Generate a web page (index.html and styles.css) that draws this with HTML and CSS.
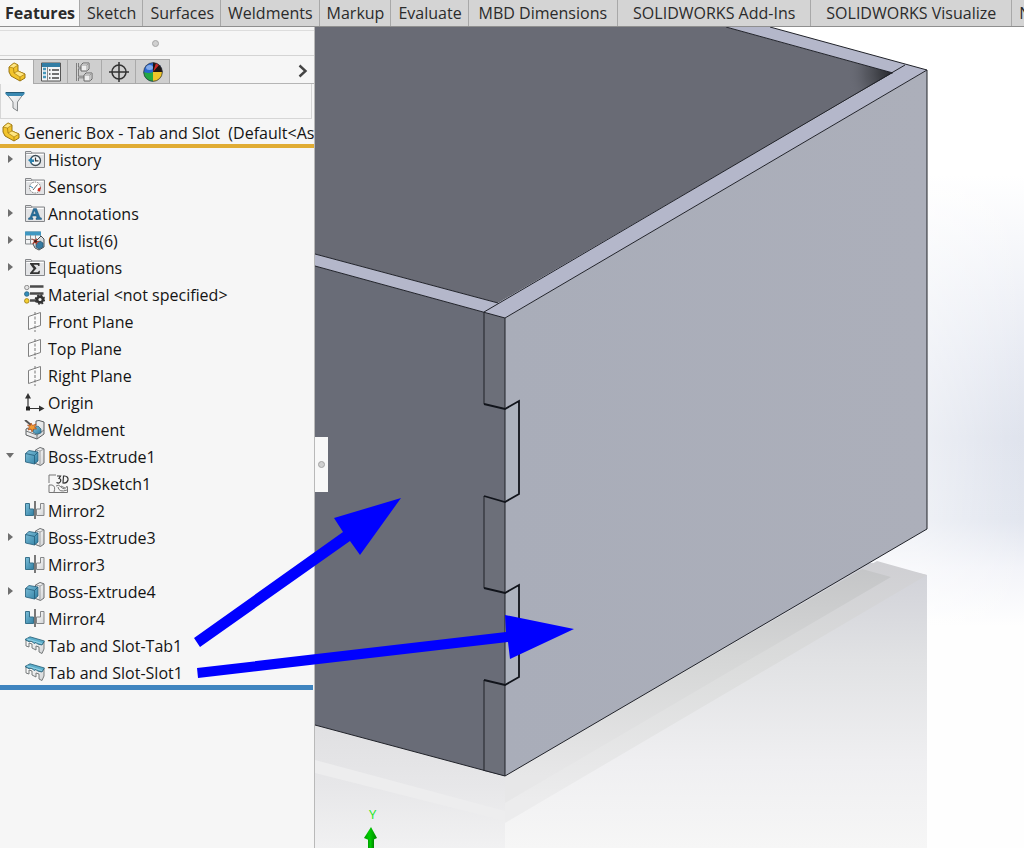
FILE: index.html
```html
<!DOCTYPE html>
<html lang="en">
<head>
<meta charset="utf-8">
<title>Generic Box - Tab and Slot</title>
<link rel="stylesheet" href="styles.css">
</head>
<body>
<svg class="sprite" aria-hidden="true">
  <defs>
    <linearGradient id="blue" x1="0" y1="0" x2="1" y2="1"><stop offset="0" stop-color="#7fc0da"/><stop offset="1" stop-color="#2f7fa3"/></linearGradient>
    <linearGradient id="grey" x1="0" y1="0" x2="1" y2="1"><stop offset="0" stop-color="#fff"/><stop offset="1" stop-color="#d2d4d6"/></linearGradient>
    <symbol id="folder" viewBox="0 0 21 20">
      <path d="M1.5 17.5V1.5H7L8 3H20.5V17.5Z" fill="#e3e4e6" stroke="#85878a"/>
      <path d="M2.5 4.5H19.5" stroke="#fff"/><path d="M2 3.5H8" stroke="#9a9c9f"/>
    </symbol>
    <symbol id="part" viewBox="0 0 20 20">
      <path d="M2 5L7 1L11 3V9L18 12V16L13 19L4 14L2 10Z" fill="#f2c42c" stroke="#8d6a08" stroke-width=".9" stroke-linejoin="round"/>
      <path d="M2 5L7 1L11 3L6.500 6ZM7 11L11 9L18 12L13 15Z" fill="#ffe680" stroke="#a67c10" stroke-width=".7"/>
      <path d="M6.500 6L7 11M13 15V19" stroke="#a67c10" stroke-width=".8"/>
    </symbol>
    <symbol id="history" viewBox="0 0 21 20">
      <use href="#folder" width="21" height="20"/>
      <circle cx="11.500" cy="10.500" r="5" fill="#f4f8fa" stroke="#3d4b54" stroke-width="1.300"/>
      <path d="M11.500 7.500V10.800H14.500" fill="none" stroke="#333" stroke-width="1.200"/>
      <path d="M4 10L8 7.500V9.500H10V12H8V14Z" fill="#2d83b0"/>
    </symbol>
    <symbol id="sensors" viewBox="0 0 21 20">
      <use href="#folder" width="21" height="20"/>
      <circle cx="11" cy="10.500" r="5.500" fill="#fff" stroke="#777" stroke-dasharray="1.500 1"/>
      <path d="M9 13L13.500 7.500" stroke="#666"/><path d="M6 9L9 11" stroke="#3186b4"/>
      <path d="M14 11.500L17 10L16 14.500L13.500 14Z" fill="#d22d20"/>
    </symbol>
    <symbol id="annotations" viewBox="0 0 21 20">
      <use href="#folder" width="21" height="20"/>
      <path d="M4.500 15.500V14L6 13.500L9.500 4.500H12.500L16 13.500L17.500 14V15.500H12V14L13 13.500L12.300 12H8.500L8 13.500L9 14V15.500ZM9.200 10H11.800L10.500 6.500Z" fill="#276f9c" stroke="#184d70" stroke-width=".4"/>
    </symbol>
    <symbol id="cutlist" viewBox="0 0 21 20">
      <path d="M1.500 1H16.500V13H1.500Z" fill="#f2f3f4" stroke="#84888b"/><path d="M1 .5H17V4.500H1Z" fill="#3f97c1"/>
      <path d="M1.500 8.500H16M6.500 4V13M11.500 4V13" stroke="#8b8f92"/>
      <path d="M9 13L17 5L20 8V16L15 19L11 17Z" fill="#d8dcdf" stroke="#4c5052"/>
      <path d="M12 13L16 10L19 12V16L15 18L12 16Z" fill="#367ba1" stroke="#24536e" stroke-width=".7"/>
      <path d="M7 7L11 9L13 7L13 10L16 10L13 12L13 14L11 12L8 13L10 10Z" fill="#b84433"/><circle cx="11.500" cy="10.300" r="1.300" fill="#32201d"/>
    </symbol>
    <symbol id="equations" viewBox="0 0 21 20">
      <use href="#folder" width="21" height="20"/>
      <path d="M6 5H15.500V8H14.500L13.500 6.800H9.500L12.500 10.300L9 14.200H13.800L15 12.700H16L15.500 16H6V15L9.500 10.700L6 6Z" fill="#333"/>
    </symbol>
    <symbol id="material" viewBox="0 0 21 20">
      <path d="M6 1.500H19.500M6 8.500H19.500M6 15.500H12" stroke="#4b4b4b" stroke-width="2.400"/>
      <circle cx="2.800" cy="2.500" r="2.200" fill="#e4e4e4" stroke="#777" stroke-width=".8"/><circle cx="2.800" cy="9" r="2.300" fill="#318cbb" stroke="#27627f" stroke-width=".8"/><circle cx="2.800" cy="15.900" r="2.300" fill="#f5cf32" stroke="#987811" stroke-width=".8"/>
      <circle cx="16" cy="14.500" r="2.900" fill="none" stroke="#333" stroke-width="2.600"/><circle cx="16" cy="14.500" r="4.500" fill="none" stroke="#333" stroke-width="1.500" stroke-dasharray="1.800 1.734"/>
    </symbol>
    <symbol id="plane" viewBox="0 0 21 20">
      <path d="M4.500 4.500L16.500 .5V13.500L4.500 17.500Z" fill="#fafafa" stroke="#808080"/><path d="M11 0V20" stroke="#777" stroke-dasharray="3 1.500"/>
    </symbol>
    <symbol id="origin" viewBox="0 0 21 20">
      <path d="M4 4V15.500H16" fill="none" stroke="#333" stroke-width="1.200"/><path d="M1 5.500L4 0L7 5.500ZM15 12.500L20.500 15.500L15 18.500Z" fill="#333"/><path d="M2 13.500H6V17.500H2Z" fill="#222"/>
    </symbol>
    <symbol id="weldment" viewBox="0 0 21 20">
      <path d="M2 9L4 8L12 11V1L15 .5L20 2V14L13 19L2 15Z" fill="url(#grey)" stroke="#5b5e60"/><path d="M13 19V15L20 10M2 11L13 15" fill="none" stroke="#707476"/>
      <path d="M10 8L14 6L17 9V13L12 14L9 12Z" fill="url(#blue)" stroke="#2a607b" stroke-width=".7"/>
      <path d="M1 0L7 5" stroke="#555" stroke-width="2"/><path d="M7 3L8.500 5.500L12 4L10.500 7L12.500 9L9.500 9L8 12L7 9L4 10L5.500 7L3.500 5L6.500 5.500Z" fill="#f19a32" stroke="#ae4b1b" stroke-width=".7"/>
    </symbol>
    <symbol id="extrude" viewBox="0 0 21 20">
      <path d="M11.500 3L16 .5L20 1.800V16L16.500 18.500L11.500 16.500Z" fill="url(#grey)" stroke="#6a6d6f"/><path d="M11.500 3L16 4V18M16 4L20 2" fill="none" stroke="#8b8e90" stroke-width=".8"/>
      <path d="M1.500 6.500L5 3.500L14 5V14L10.500 17L1.500 15Z" fill="url(#blue)" stroke="#235c78" stroke-width=".8"/><path d="M1.500 6.500L10.500 8.500L14 5M10.500 8.500V17" fill="none" stroke="#235c78" stroke-width=".8"/>
    </symbol>
    <symbol id="sketch3d" viewBox="0 0 21 20">
      <path d="M8 1H1V9M1 11V18.500H19.500V12.500" fill="none" stroke="#777"/>
      <path d="M9 2H12.500L11 4.500Q13.500 4.800 12.500 7.500Q11 10 8.500 8.500M15.500 2H16.500Q20.500 2.500 20 6Q19 9.500 15 9Z" fill="none" stroke="#333" stroke-width="1.200"/>
      <path d="M1 11H4Q8 12 6 18M8 12Q11 10 13 13Q17 17 19 12M10 13Q11 19 19 16M13 12L17 14" fill="none" stroke="#777"/>
    </symbol>
    <symbol id="mirror" viewBox="0 0 21 20">
      <path d="M1.500 2.500H5.500V8H9.500V14.500H1.500Z" fill="url(#blue)" stroke="#37718b"/><path d="M20 2.500H16.500V8H12.500V14.500H20Z" fill="url(#grey)" stroke="#858789"/><path d="M11 0V18" stroke="#444" stroke-width="1.400"/>
    </symbol>
    <symbol id="tabslot" viewBox="0 0 21 20">
      <path d="M2 4V10L5 11V7L8 8V12L12 14V10L15 11V16L18 17.500L20 13V6L17 8Z" fill="url(#grey)" stroke="#6c6f70" stroke-width=".9"/>
      <path d="M1 3.500L6 .8L20.500 5L18 9L13.500 8L12 6.500L10 7.500L7.500 5L5 5.800Z" fill="#5caecb" stroke="#245c73" stroke-width=".8"/><path d="M3 3L18 7.500" stroke="#a8dcec" stroke-width=".8"/>
    </symbol>
  </defs>
</svg>

<nav class="ribbon" aria-label="Command tabs">
  <button class="tab active">Features</button><button class="tab">Sketch</button><button class="tab">Surfaces</button><button class="tab">Weldments</button><button class="tab">Markup</button><button class="tab">Evaluate</button><button class="tab wide">MBD Dimensions</button><button class="tab addin">SOLIDWORKS Add-Ins</button><button class="tab addin">SOLIDWORKS Visualize</button><button class="tab">N</button>
</nav>

<main class="workspace">
  <aside class="panel">
    <div class="grip"><span class="dot"></span></div>
    <div class="managers">
      <button class="manager active" aria-label="Feature tree"><svg width="20" height="20"><use href="#part"/></svg></button>
      <button class="manager" aria-label="Properties"><svg width="20" height="20" viewBox="0 0 20 20"><path d="M.5 1H19.500V19H.5Z" fill="#f4f5f6" stroke="#555"/><path d="M1 1H19V5H1Z" fill="#327da4"/><path d="M6.500 5V19" stroke="#888"/><path d="M2 7H5M2 11H5M2 15H5" stroke="#4697ba" stroke-width="2.500"/><path d="M8 8H9.500M8 12H9.500M8 16H9.500M11 8H18M11 12H18M11 16H18" stroke="#444" stroke-width="1.300"/></svg></button>
      <button class="manager" aria-label="Configurations"><svg width="20" height="20" viewBox="0 0 20 20" fill="#eee" stroke="#666"><path d="M2.500 1V19M2.500 6H8M2.500 15H9" stroke-width="2.500"/><path d="M2.500 1V19M2.500 6H8M2.500 15H9" stroke="#fff" stroke-width=".7"/><path d="M6 3L8 1H14V7L12 9H6ZM9 13L11 11H17V17L15 19H9Z"/><path d="M6 3H12V9M12 3L14 1M9 13H15V19M15 13L17 11" fill="none" stroke="#999"/></svg></button>
      <button class="manager" aria-label="Dimensions"><svg width="20" height="20" viewBox="0 0 20 20" fill="none" stroke="#333" stroke-width="1.500"><circle cx="10" cy="10" r="7"/><path d="M10 0V20M0 10H20"/></svg></button>
      <button class="manager" aria-label="Display"><svg width="20" height="20" viewBox="0 0 20 20"><circle cx="10" cy="10" r="9.500" fill="#2867d0"/><path d="M10 10L10 .5A9.500 9.500 0 0 1 19.500 10Z" fill="#1d1514"/><path d="M10 10L13 1L16 3Z" fill="#c92828"/><path d="M.5 10Q6 12 10 10V19.500A9.500 9.500 0 0 1 .5 10Z" fill="#24a744"/><path d="M10 10L19.500 10A9.500 9.500 0 0 1 10 19.500Z" fill="#efc529"/><ellipse cx="6.500" cy="5.500" rx="3.500" ry="2.500" fill="#a8c7f5" opacity=".7"/><circle cx="10" cy="10" r="9.300" fill="none" stroke="#333" stroke-width=".7"/></svg></button>
      <button class="more" aria-label="More managers"><svg width="10" height="14" viewBox="0 0 10 14"><path d="M1.500 1.500L7.500 7L1.500 12.500" fill="none" stroke="#444" stroke-width="2.400"/></svg></button>
    </div>
    <label class="filter">
      <svg width="20" height="21" viewBox="0 0 20 21"><path d="M.8 2H19L12.500 11V20L8 17V11Z" fill="url(#grey)" stroke="#85898b"/><path d="M.5 1H19.500V3L17.500 5H2.500L.5 3Z" fill="#3a89b2"/><path d="M1 1.500H19" stroke="#245b78"/></svg>
      <input type="text" aria-label="Filter tree">
    </label>
    <div class="root"><svg width="20" height="20"><use href="#part"/></svg><span>Generic Box - Tab and Slot  (Default&lt;As</span></div>
    <ul class="tree">
      <li><button class="twisty" aria-label="Expand"></button><svg class="icon"><use href="#history"/></svg>History</li>
      <li><i class="blank"></i><svg class="icon"><use href="#sensors"/></svg>Sensors</li>
      <li><button class="twisty" aria-label="Expand"></button><svg class="icon"><use href="#annotations"/></svg>Annotations</li>
      <li><button class="twisty" aria-label="Expand"></button><svg class="icon"><use href="#cutlist"/></svg>Cut list(6)</li>
      <li><button class="twisty" aria-label="Expand"></button><svg class="icon"><use href="#equations"/></svg>Equations</li>
      <li><i class="blank"></i><svg class="icon"><use href="#material"/></svg>Material &lt;not specified&gt;</li>
      <li><i class="blank"></i><svg class="icon"><use href="#plane"/></svg>Front Plane</li>
      <li><i class="blank"></i><svg class="icon"><use href="#plane"/></svg>Top Plane</li>
      <li><i class="blank"></i><svg class="icon"><use href="#plane"/></svg>Right Plane</li>
      <li><i class="blank"></i><svg class="icon"><use href="#origin"/></svg>Origin</li>
      <li><i class="blank"></i><svg class="icon"><use href="#weldment"/></svg>Weldment</li>
      <li><button class="twisty open" aria-label="Collapse"></button><svg class="icon"><use href="#extrude"/></svg>Boss-Extrude1</li>
      <li class="child"><i class="blank"></i><svg class="icon"><use href="#sketch3d"/></svg>3DSketch1</li>
      <li><i class="blank"></i><svg class="icon"><use href="#mirror"/></svg>Mirror2</li>
      <li><button class="twisty" aria-label="Expand"></button><svg class="icon"><use href="#extrude"/></svg>Boss-Extrude3</li>
      <li><i class="blank"></i><svg class="icon"><use href="#mirror"/></svg>Mirror3</li>
      <li><button class="twisty" aria-label="Expand"></button><svg class="icon"><use href="#extrude"/></svg>Boss-Extrude4</li>
      <li><i class="blank"></i><svg class="icon"><use href="#mirror"/></svg>Mirror4</li>
      <li><i class="blank"></i><svg class="icon"><use href="#tabslot"/></svg>Tab and Slot-Tab1</li>
      <li><i class="blank"></i><svg class="icon"><use href="#tabslot"/></svg>Tab and Slot-Slot1</li>
    </ul>
    <div class="rollback"></div>
  </aside>

  <section class="viewport" aria-label="Model view">
    <svg class="scene" viewBox="315 27 709 821" preserveAspectRatio="xMinYMin slice">
      <defs>
        <linearGradient id="sky" x1="0" y1="0" x2="0" y2="1"><stop offset=".18" stop-color="#fff"/><stop offset=".4" stop-color="#e8ebf3"/><stop offset=".5" stop-color="#dfe3ed"/><stop offset=".6" stop-color="#e2e6ef"/><stop offset=".66" stop-color="#f3f4f9"/><stop offset=".73" stop-color="#fefefe"/><stop offset="1" stop-color="#fefefe"/></linearGradient>
        <linearGradient id="haze" x1="0" y1="0" x2="1" y2="0"><stop offset="0" stop-color="#fff" stop-opacity=".5"/><stop offset=".35" stop-color="#fff" stop-opacity=".45"/><stop offset="1" stop-color="#fff" stop-opacity="0"/></linearGradient>
        <linearGradient id="mirrorR" x1="0" y1="560" x2="0" y2="848" gradientUnits="userSpaceOnUse"><stop offset="0" stop-color="#cfd0d7"/><stop offset=".35" stop-color="#e1e2e4"/><stop offset=".7" stop-color="#efeff1"/><stop offset="1" stop-color="#f6f6f6"/></linearGradient>
        <linearGradient id="mirrorL" x1="0" y1="725" x2="0" y2="848" gradientUnits="userSpaceOnUse"><stop offset="0" stop-color="#e0e0e2"/><stop offset=".5" stop-color="#e7e7e9"/><stop offset="1" stop-color="#f1f1f2"/></linearGradient>
        <linearGradient id="band" x1="0" y1="560" x2="0" y2="776" gradientUnits="userSpaceOnUse"><stop offset="0" stop-color="#c3c4c6"/><stop offset=".45" stop-color="#d5d6d6"/><stop offset="1" stop-color="#e7e7e8"/></linearGradient>
        <linearGradient id="band2" x1="0" y1="560" x2="0" y2="800" gradientUnits="userSpaceOnUse"><stop offset="0" stop-color="#cfcfd3"/><stop offset=".4" stop-color="#dadbdb"/><stop offset="1" stop-color="#ececed"/></linearGradient>
        <radialGradient id="corner" cx="893" cy="73" r="46" gradientUnits="userSpaceOnUse"><stop offset="0" stop-color="#26272c"/><stop offset=".3" stop-color="#3e4046"/><stop offset=".6" stop-color="#4b4d54" stop-opacity=".6"/><stop offset="1" stop-color="#696b75" stop-opacity="0"/></radialGradient>
        <linearGradient id="face" x1="0" y1="0" x2="1" y2="0"><stop offset="0" stop-color="#a9adb9"/><stop offset="1" stop-color="#acafba"/></linearGradient>
        <linearGradient id="axis"><stop offset="0" stop-color="#009b00"/><stop offset=".4" stop-color="#0c0"/><stop offset="1" stop-color="#008500"/></linearGradient>
      </defs>
      <path d="M315 27H1024V848H315Z" fill="url(#sky)"/>
      <path d="M860 27H1024V630H860Z" fill="url(#haze)"/>
      <path d="M868 562L927 575V848H505V776Z" fill="url(#mirrorR)"/>
      <path d="M877 561L927 575L505 823V776Z" fill="url(#band2)"/>
      <path d="M862 569L891 577L505 803V776Z" fill="url(#band)"/>
      <path d="M315 725L505 776V848H315Z" fill="url(#mirrorL)"/>
      <path d="M315 760L505 811V821L315 773Z" fill="#ededee"/>

      <path d="M315 27H726L893 73L498 303L315 254Z" fill="#696b75"/>
      <path d="M820 53L893 73L820 116Z" fill="url(#corner)"/>
      <path d="M315 266L505 318V776L315 725Z" fill="#696c77"/>
      <path d="M484 312L505 318V409L484 404ZM484 496L505 502V593L484 588ZM484 680L505 685V776L484 771Z" fill="#6c6f79"/>
      <path d="M505 318L927 70V529L505 776Z" fill="url(#face)"/>
      <path d="M505 409L519 401V494L505 502ZM505 593L519 585V677L505 685Z" fill="#adb3be"/>
      <path d="M315 254L498 303L893 73L726 27H770L927 70L505 318L315 266Z" fill="#b4b7ca"/>
      <path d="M315 254L498 303M315 266L505 318L927 70L770 27M726 27L893 73M484 312L905 65M927 70V529L505 776L315 725M505 318V776M484 312V404M484 496V588M484 680V771" fill="none" stroke="#202229"/>
      <path d="M484 404L505 409L519 401V494L505 502L484 496M484 588L505 593L519 585V677L505 685L484 680" fill="none" stroke="#11141b" stroke-width="1.800"/>
      <text class="axis-label" x="369" y="819">Y</text>
      <path d="M368 837H374V848H368Z" fill="url(#axis)"/><path d="M371 827L377 838Q371 842 364 838Z" fill="url(#axis)"/>
    </svg>
    <button class="handle" aria-label="Collapse panel"><span class="dot"></span></button>
  </section>

  <svg class="callouts" viewBox="0 27 1024 821" preserveAspectRatio="xMinYMin slice" aria-hidden="true">
    <path d="M194 638L343 532L334 518L401 498L360 555L350 541L200 647Z" fill="#00f"/>
    <path d="M197 668L506 632L505 615L574 629L510 659L508 642L198 678Z" fill="#00f"/>
  </svg>
</main>
</body>
</html>
```
FILE: styles.css
```css
* { box-sizing: border-box; }
body {
  margin: 0;
  height: 100vh;
  display: flex;
  flex-direction: column;
  overflow: hidden;
  font: 16px/26px "Open Sans", "Noto Sans", sans-serif;
  color: #141414;
  background: #f6f6f6;
}
button { font: inherit; color: inherit; border: 0; padding: 0; background: none; }
svg { display: block; flex: none; }
.sprite { position: absolute; width: 0; height: 0; }

.ribbon {
  display: flex;
  flex: none;
  height: 27px;
  overflow: hidden;
  background: #d4d4d4;
  border-bottom: 1px solid #8f8f8f;
}
.tab {
  flex: none;
  padding: 0 6px 0 7px;
  border-right: 1px solid #a8a8a8;
  line-height: 24px;
  white-space: nowrap;
  color: #2b2b2b;
}
.tab.wide { padding: 0 10px; }
.tab.addin { padding: 0 15px; }
.tab.active { padding: 0 4px 0 5px; background: #f7f7f7; font-weight: 700; }

.workspace { position: relative; display: flex; flex: 1; min-height: 0; }
.panel {
  display: flex;
  flex-direction: column;
  flex: none;
  width: 315px;
  padding-top: 3px;
  overflow: hidden;
  background: #f6f6f6;
  border-right: 1px solid #b9b9b9;
}
.grip {
  display: flex;
  align-items: center;
  justify-content: center;
  height: 26px;
  padding-right: 4px;
  border-top: 1px solid #ddd;
  border-bottom: 1px solid #d4d4d4;
}
.dot {
  width: 7px;
  height: 7px;
  border: 1px solid #a5a5a5;
  border-radius: 50%;
  background: #d0d0d0;
}
.managers {
  display: flex;
  height: 25px;
  margin-top: 3px;
}
.manager {
  display: flex;
  align-items: center;
  justify-content: center;
  width: 34px;
  background: #cfcfcf;
  border: 1px solid #aaa;
  border-left: 0;
}
.manager.active { background: #f7f7f7; border-bottom: 0; }
.more {
  display: flex;
  flex: 1;
  align-items: center;
  justify-content: flex-end;
  padding-right: 6px;
  border-bottom: 1px solid #b5b5b5;
}
.filter {
  display: flex;
  align-items: flex-start;
  height: 35px;
  margin-right: 2px;
  padding: 7px 4px;
  border: 1px solid #d6d6d6;
  border-top: 0;
}
.filter input { flex: 1; min-width: 0; height: 20px; padding: 0; border: 0; outline: 0; background: none; font: inherit; }
.root {
  display: flex;
  align-items: center;
  gap: 3px;
  height: 29px;
  padding: 2px 0 0 1px;
  border-bottom: 4px solid #e0ac34;
  white-space: pre;
}
.root svg { margin-bottom: 2px; }
.tree { list-style: none; margin: -2px 0 -1px; padding: 0; }
.tree li {
  display: flex;
  align-items: center;
  height: 27px;
  white-space: nowrap;
}
.tree .child { padding-left: 24px; }
.icon { width: 21px; height: 20px; margin-right: 3px; }
.twisty, .blank { flex: none; width: 24px; height: 20px; padding-left: 8px; }
.twisty::before {
  content: "";
  display: block;
  width: 0;
  height: 0;
  margin-bottom: 2px;
  border: 4px solid transparent;
  border-left: 5px solid #6f6f6f;
  border-right: 0;
}
.twisty.open { padding-left: 6px; }
.twisty.open::before {
  border: 4px solid transparent;
  border-top: 5px solid #6f6f6f;
  border-bottom: 0;
}
.rollback { height: 5px; margin-right: 1px; background: #3f84bf; }

.viewport { position: relative; flex: 1; min-width: 0; }
.scene { position: absolute; inset: 0; width: 100%; height: 100%; }
.axis-label { font: 13px "Open Sans", sans-serif; fill: #1ee61e; }
.handle {
  position: absolute;
  left: 0;
  top: 50%;
  display: flex;
  align-items: center;
  justify-content: center;
  width: 13px;
  height: 55px;
  margin-top: -1px;
  background: #f8f8f8;
}
.callouts { position: absolute; inset: 0; width: 100%; height: 100%; pointer-events: none; }
```
